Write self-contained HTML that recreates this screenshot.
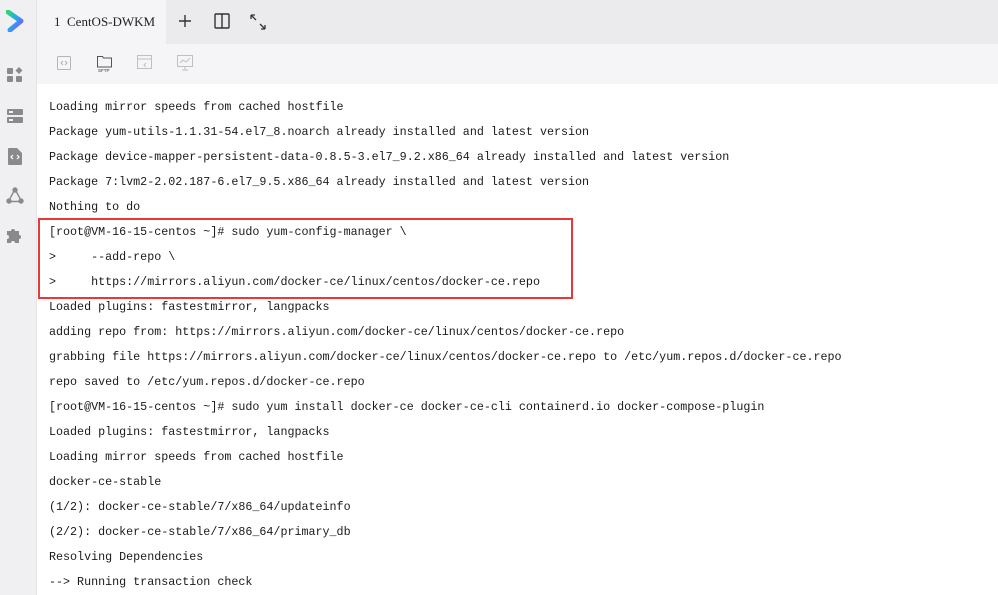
<!DOCTYPE html>
<html><head><style>
body{margin:0;width:998px;height:595px;overflow:hidden;background:#fff;font-family:"Liberation Sans",sans-serif;position:relative}
.side{position:absolute;left:0;top:0;width:36px;height:595px;background:#f0f0f2;border-right:1px solid #e4e4e4}
.tabbar{position:absolute;left:37px;top:0;right:0;height:44px;background:#ebebed}
.tab{position:absolute;left:0;top:0;width:129px;height:44px;background:#f5f5f7;font-family:"Liberation Serif",serif;font-size:13px;color:#222;line-height:44px;padding-left:17px;box-sizing:border-box}
.tool{position:absolute;left:37px;top:44px;right:0;height:40px;background:#f5f5f7}
.term{position:absolute;left:49px;top:95px;font-family:"Liberation Mono",monospace;font-size:11.7px;line-height:25px;color:#1a1a1a;white-space:pre}
.box{position:absolute;left:38px;top:218px;width:531px;height:77px;border:2px solid #e8383a}
.ic{position:absolute}
</style></head><body>
<div class="side">
<svg class="ic" style="left:6px;top:10px" width="18" height="22" viewBox="0 0 18 22"><defs><linearGradient id="g" x1="0" y1="0" x2="1" y2="1"><stop offset="0" stop-color="#2ed47a"/><stop offset=".5" stop-color="#2aa4f4"/><stop offset="1" stop-color="#8a4cf0"/></linearGradient></defs><path d="M2 2 L15 11 L4 20" fill="none" stroke="url(#g)" stroke-width="5" stroke-linejoin="round" stroke-linecap="round"/></svg>
<svg class="ic" style="left:7px;top:67px" width="16" height="16" viewBox="0 0 16 16" fill="#8a8a8e"><rect x="0" y="1" width="6" height="6" rx="1"/><rect x="0" y="9" width="6" height="6" rx="1"/><rect x="9" y="9" width="6" height="6" rx="1"/><path d="M12 0 L15.5 3.5 L12 7 L8.5 3.5Z"/></svg>
<svg class="ic" style="left:7px;top:109px" width="16" height="14" viewBox="0 0 16 14" fill="#8a8a8e"><rect x="0" y="0" width="16" height="6" rx="1"/><rect x="0" y="8" width="16" height="6" rx="1"/><rect x="2" y="2" width="4" height="2" fill="#f0f0f2"/><rect x="2" y="10" width="4" height="2" fill="#f0f0f2"/></svg>
<svg class="ic" style="left:8px;top:148px" width="14" height="17" viewBox="0 0 14 17"><path d="M0 1a1 1 0 0 1 1-1h8l5 5v11a1 1 0 0 1-1 1H1a1 1 0 0 1-1-1z" fill="#8a8a8e"/><path d="M5 7l-2 2 2 2M9 7l2 2-2 2" stroke="#fff" fill="none" stroke-width="1.2"/></svg>
<svg class="ic" style="left:6px;top:187px" width="18" height="17" viewBox="0 0 18 17" fill="none" stroke="#8a8a8e" stroke-width="1.4"><circle cx="9" cy="3" r="2" fill="#8a8a8e"/><circle cx="3" cy="14" r="2" fill="#8a8a8e"/><circle cx="15" cy="14" r="2" fill="#8a8a8e"/><path d="M7.5 5 L4 11.5 M10.5 5 L14 11.5 M5 14.5 H13"/></svg>
<svg class="ic" style="left:7px;top:227px" width="16" height="16" viewBox="0 0 16 16" fill="#8a8a8e"><path d="M0 4h4a2 2 0 1 1 4 0h4v4a2 2 0 1 1 0 4v4H8a2 2 0 1 0-4 0H0v-4a2 2 0 1 0 0-4z"/></svg>
</div>
<div class="tabbar"><div class="tab">1&nbsp;&nbsp;CentOS-DWKM</div>
<svg class="ic" style="left:141px;top:14px" width="14" height="14" viewBox="0 0 14 14" stroke="#333" stroke-width="1.4"><path d="M7 1v12M1 7h12"/></svg>
<svg class="ic" style="left:177px;top:13px" width="16" height="16" viewBox="0 0 16 16" fill="none" stroke="#333" stroke-width="1.4"><rect x="1" y="1" width="14" height="14" rx="1"/><path d="M8 1v14"/></svg>
<svg class="ic" style="left:213px;top:14px" width="16" height="16" viewBox="0 0 16 16" fill="none" stroke="#333" stroke-width="1.3"><path d="M1 1l5 5M1 1h4M1 1v4M15 15l-5-5M15 15h-4M15 15v-4"/></svg>
</div>
<div class="tool">
<svg class="ic" style="left:20px;top:12px" width="14" height="14" viewBox="0 0 14 14" fill="none" stroke="#b5b5b8"><rect x=".5" y=".5" width="13" height="13" rx="1"/><path d="M6 5l-2 2 2 2M8 5l2 2-2 2"/></svg>
<svg class="ic" style="left:60px;top:11px" width="16" height="18" viewBox="0 0 16 18" fill="none" stroke="#555"><path d="M.5 1.5h5l1 1.5h8v9h-14z"/><text x="1" y="17" font-size="4.5" font-family="Liberation Sans" fill="#333" stroke="none">SFTP</text></svg>
<svg class="ic" style="left:100px;top:11px" width="16" height="16" viewBox="0 0 16 16" fill="none" stroke="#c0c0c3"><rect x=".5" y=".5" width="14" height="13"/><path d="M.5 4h14M9 8l-2 2 2 2"/></svg>
<svg class="ic" style="left:140px;top:11px" width="16" height="16" viewBox="0 0 16 16" fill="none" stroke="#c0c0c3"><rect x=".5" y=".5" width="15" height="11"/><path d="M3 8l3-3 3 2 4-4M8 12v3M5 15h6"/></svg>
</div>
<div class="term">Loading mirror speeds from cached hostfile
Package yum-utils-1.1.31-54.el7_8.noarch already installed and latest version
Package device-mapper-persistent-data-0.8.5-3.el7_9.2.x86_64 already installed and latest version
Package 7:lvm2-2.02.187-6.el7_9.5.x86_64 already installed and latest version
Nothing to do
[root@VM-16-15-centos ~]# sudo yum-config-manager \
>     --add-repo \
>     https://mirrors.aliyun.com/docker-ce/linux/centos/docker-ce.repo
Loaded plugins: fastestmirror, langpacks
adding repo from: https://mirrors.aliyun.com/docker-ce/linux/centos/docker-ce.repo
grabbing file https://mirrors.aliyun.com/docker-ce/linux/centos/docker-ce.repo to /etc/yum.repos.d/docker-ce.repo
repo saved to /etc/yum.repos.d/docker-ce.repo
[root@VM-16-15-centos ~]# sudo yum install docker-ce docker-ce-cli containerd.io docker-compose-plugin
Loaded plugins: fastestmirror, langpacks
Loading mirror speeds from cached hostfile
docker-ce-stable
(1/2): docker-ce-stable/7/x86_64/updateinfo
(2/2): docker-ce-stable/7/x86_64/primary_db
Resolving Dependencies
--> Running transaction check</div>
<div class="box"></div>
</body></html>
